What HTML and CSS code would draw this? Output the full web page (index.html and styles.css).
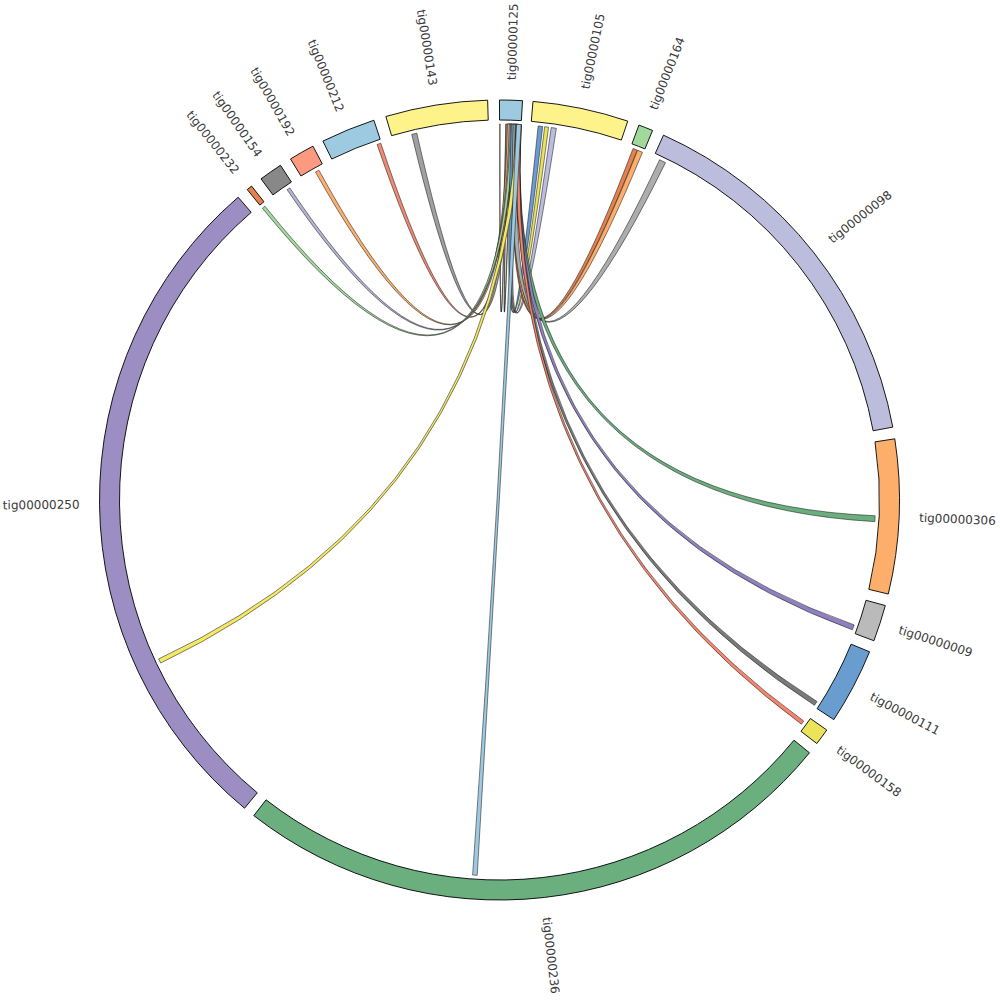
FILE: index.html
```html
<!DOCTYPE html>
<html lang="en">
<head>
<meta charset="utf-8">
<title>Chord diagram</title>
<link rel="stylesheet" href="styles.css">
</head>
<body>
<div class="chart">
  <svg id="chord" width="1000" height="1000" viewBox="0 0 1000 1000">
    <g id="root" transform="translate(499.5,500)">
      <g id="ribbons"></g>
      <g id="groups"></g>
      <g id="labels"></g>
    </g>
  </svg>
</div>
<script src="script.js"></script>
</body>
</html>
```

FILE: styles.css
```css
html, body {
  margin: 0;
  padding: 0;
  background: #ffffff;
}
.chart {
  width: 1000px;
  height: 1000px;
}
.chart svg {
  display: block;
}
.group {
  stroke: #000000;
  stroke-width: 0.9;
}
.ribbon {
  stroke: #1a1a1a;
  stroke-width: 0.55;
}
.label {
  font-family: "DejaVu Sans", "Liberation Sans", sans-serif;
  font-size: 12px;
  fill: #3a3a3a;
}
```

FILE: script.js
```js
(function () {
  var NS = "http://www.w3.org/2000/svg";
  var R_IN = 380, R_OUT = 400, R_CH = 376, R_LB = 420;

  function rad(d) { return d * Math.PI / 180; }
  function pt(r, a) { return [r * Math.sin(rad(a)), -r * Math.cos(rad(a))]; }
  function f(n) { return n.toFixed(2); }

  function groupPath(a0, a1) {
    var p0 = pt(R_OUT, a0), p1 = pt(R_OUT, a1), p2 = pt(R_IN, a1), p3 = pt(R_IN, a0);
    var large = (a1 - a0) > 180 ? 1 : 0;
    return "M" + f(p0[0]) + "," + f(p0[1]) +
      "A" + R_OUT + "," + R_OUT + " 0 " + large + " 1 " + f(p1[0]) + "," + f(p1[1]) +
      "L" + f(p2[0]) + "," + f(p2[1]) +
      "A" + R_IN + "," + R_IN + " 0 " + large + " 0 " + f(p3[0]) + "," + f(p3[1]) + "Z";
  }

  function ribbonPath(s0, s1, t0, t1) {
    var r = R_CH;
    var a = pt(r, s0), b = pt(r, s1), c = pt(r, t0), d = pt(r, t1);
    return "M" + f(a[0]) + "," + f(a[1]) +
      "A" + r + "," + r + " 0 0 1 " + f(b[0]) + "," + f(b[1]) +
      "Q0,0 " + f(c[0]) + "," + f(c[1]) +
      "A" + r + "," + r + " 0 0 1 " + f(d[0]) + "," + f(d[1]) +
      "Q0,0 " + f(a[0]) + "," + f(a[1]) + "Z";
  }

  var groups = [
    ["tig00000125", 0, 3.3, "#9ecae1"],
    ["tig00000105", 4.8, 18.7, "#fef38b"],
    ["tig00000164", 20.4, 22.5, "#a1d99b"],
    ["tig00000098", 24.2, 79.5, "#bcbddc"],
    ["tig00000306", 81.2, 103.6, "#fdae6b"],
    ["tig00000009", 105.3, 110.6, "#bababa"],
    ["tig00000111", 112.3, 123.3, "#6a9dcf"],
    ["tig00000158", 125.1, 127.5, "#ebe35a"],
    ["tig00000236", 129.2, 217.9, "#6baf7f"],
    ["tig00000250", 219.6, 319.2, "#9c8dc3"],
    ["tig00000232", 320.9, 321.7, "#e5804f"],
    ["tig00000154", 323.4, 326.8, "#888888"],
    ["tig00000192", 328.5, 332.2, "#fb9a81"],
    ["tig00000212", 333.8, 341.7, "#9ecae1"],
    ["tig00000143", 343.5, 358.3, "#fef38b"]
  ];

  // [hub start, hub end, other start, other end, colour]
  var ribbons = [
    [0.00, 0.12, 0.95, 1.07, "#fffbe3"],
    [1.15, 1.25, 1.75, 1.85, "#f1e27c"],
    [1.00, 1.80, 346.5, 347.3, "#a0a0a0"],
    [1.30, 1.90, 341.0, 341.6, "#f08a72"],
    [1.20, 1.80, 330.7, 331.3, "#fdae6b"],
    [1.50, 2.00, 325.6, 326.1, "#b4b4d8"],
    [1.70, 2.20, 320.9, 321.4, "#a1d99b"],
    [1.90, 2.70, 7.9, 8.7, "#bcbddc"],
    [2.00, 2.60, 6.9, 7.5, "#ebe35a"],
    [1.80, 2.50, 5.9, 6.6, "#6a9dcf"],
    [2.20, 2.90, 20.8, 21.5, "#e5804f"],
    [2.30, 3.10, 21.55, 22.35, "#fdae6b"],
    [2.10, 3.10, 25.2, 26.2, "#adadad"],
    [2.40, 3.30, 92.4, 93.3, "#6baf7f"],
    [2.50, 3.30, 109.4, 110.2, "#8f80c0"],
    [2.60, 3.30, 122.4, 123.1, "#7a7a7a"],
    [2.70, 3.30, 126.0, 126.6, "#f4856c"],
    [2.60, 3.30, 244.3, 245.0, "#f5e964"],
    [2.60, 3.30, 183.4, 184.1, "#9ecae1"]
  ];

  var gRib = document.getElementById("ribbons");
  var gGrp = document.getElementById("groups");
  var gLab = document.getElementById("labels");

  ribbons.forEach(function (r) {
    var p = document.createElementNS(NS, "path");
    p.setAttribute("class", "ribbon");
    p.setAttribute("d", ribbonPath(r[0], r[1], r[2], r[3]));
    p.setAttribute("fill", r[4]);
    gRib.appendChild(p);
  });

  groups.forEach(function (g) {
    var p = document.createElementNS(NS, "path");
    p.setAttribute("class", "group");
    p.setAttribute("d", groupPath(g[1], g[2]));
    p.setAttribute("fill", g[3]);
    gGrp.appendChild(p);

    var mid = (g[1] + g[2]) / 2;
    var t = document.createElementNS(NS, "text");
    t.setAttribute("class", "label");
    t.setAttribute("dy", "0.35em");
    if (mid > 180) {
      t.setAttribute("transform", "rotate(" + (mid - 90) + ") translate(" + R_LB + ",0) rotate(180)");
      t.setAttribute("text-anchor", "end");
    } else {
      t.setAttribute("transform", "rotate(" + (mid - 90) + ") translate(" + R_LB + ",0)");
      t.setAttribute("text-anchor", "start");
    }
    t.textContent = g[0];
    gLab.appendChild(t);
  });
})();
```
